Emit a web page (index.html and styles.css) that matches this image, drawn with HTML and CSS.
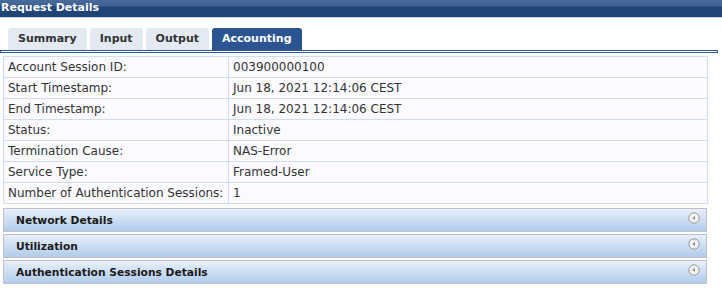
FILE: index.html
```html
<!DOCTYPE html>
<html lang="en">
<head>
  <meta charset="UTF-8">
  <title>Request Details</title>
  <link rel="stylesheet" href="styles.css">
</head>
<body>
<!-- Panel Title -->
<div class="panel-title">Request Details</div>

<!-- Tabs -->
<div class="tabs">
  <div class="tab">Summary</div>
  <div class="tab">Input</div>
  <div class="tab">Output</div>
  <div class="tab active">Accounting</div>
</div>
<div class="tab-rule"></div>

<!-- Accounting Details -->
<table class="details">
  <tr><td class="key">Account Session ID:</td><td>003900000100</td></tr>
  <tr><td class="key">Start Timestamp:</td><td>Jun 18, 2021 12:14:06 CEST</td></tr>
  <tr><td class="key">End Timestamp:</td><td>Jun 18, 2021 12:14:06 CEST</td></tr>
  <tr><td class="key">Status:</td><td>Inactive</td></tr>
  <tr><td class="key">Termination Cause:</td><td>NAS-Error</td></tr>
  <tr><td class="key">Service Type:</td><td>Framed-User</td></tr>
  <tr><td class="key">Number of Authentication Sessions:</td><td>1</td></tr>
</table>

<!-- Collapsed Sections -->
<div class="sections">
  <div class="section-head">
    <span>Network Details</span>
    <svg class="toggle" width="12" height="12" viewBox="0 0 12 12"><circle cx="6" cy="6" r="5.2" fill="#f2f2f2" stroke="#9a9a9a" stroke-width="1"/><path d="M4.2 6 L7 4.2 L7 7.8 Z" fill="#858585"/></svg>
  </div>
  <div class="section-head">
    <span>Utilization</span>
    <svg class="toggle" width="12" height="12" viewBox="0 0 12 12"><circle cx="6" cy="6" r="5.2" fill="#f2f2f2" stroke="#9a9a9a" stroke-width="1"/><path d="M4.2 6 L7 4.2 L7 7.8 Z" fill="#858585"/></svg>
  </div>
  <div class="section-head">
    <span>Authentication Sessions Details</span>
    <svg class="toggle" width="12" height="12" viewBox="0 0 12 12"><circle cx="6" cy="6" r="5.2" fill="#f2f2f2" stroke="#9a9a9a" stroke-width="1"/><path d="M4.2 6 L7 4.2 L7 7.8 Z" fill="#858585"/></svg>
  </div>
</div>
</body>
</html>
```
FILE: styles.css
```css
/* Page */
html, body {
  margin: 0;
  padding: 0;
  background: #fff;
  font-family: "DejaVu Sans", Verdana, sans-serif;
  color: #333;
}

/* Panel Title */
.panel-title {
  height: 17px;
  line-height: 15px;
  padding-left: 1px;
  font-size: 11px;
  font-weight: bold;
  color: #fff;
  background: linear-gradient(#4a6d9b 0, #3b5f8f 6px, #1f4677 7px, #1e4576 100%);
  border-bottom: 1px solid #c9d3e0;
}

/* Tabs */
.tabs {
  display: flex;
  gap: 3px;
  margin-top: 10px;
  padding-left: 8px;
}

.tab {
  height: 22px;
  line-height: 22px;
  padding: 0 10px;
  font-size: 11px;
  font-weight: bold;
  color: #333;
  background: #e3eaf4;
  border-radius: 3px 3px 0 0;
}

.tab.active {
  background: #2b5592;
  color: #fff;
}

.tab-rule {
  width: 716px;
  height: 1px;
  border: 1px solid #2b5592;
}

/* Details Table */
.details {
  margin: 3px 0 0 3px;
  width: 705px;
  border-collapse: collapse;
  background: #fbfbff;
  font-size: 12px;
}

.details td {
  height: 20px;
  padding: 0 4px;
  border: 1px solid #cfdcf2;
  white-space: nowrap;
}

.details td.key {
  width: 216px;
}

/* Collapsed Sections */
.sections {
  display: flex;
  flex-direction: column;
  gap: 2px;
  margin: 4px 0 0 3px;
  width: 704px;
}

.section-head {
  display: flex;
  align-items: center;
  justify-content: space-between;
  height: 22px;
  padding: 0 6px 0 12px;
  font-size: 10.7px;
  font-weight: bold;
  color: #1a1a1a;
  background: linear-gradient(#e8f0fb, #b1cbe9);
  border: 1px solid #c0c0cc;
}

.toggle {
  margin-bottom: 4px;
}
```
